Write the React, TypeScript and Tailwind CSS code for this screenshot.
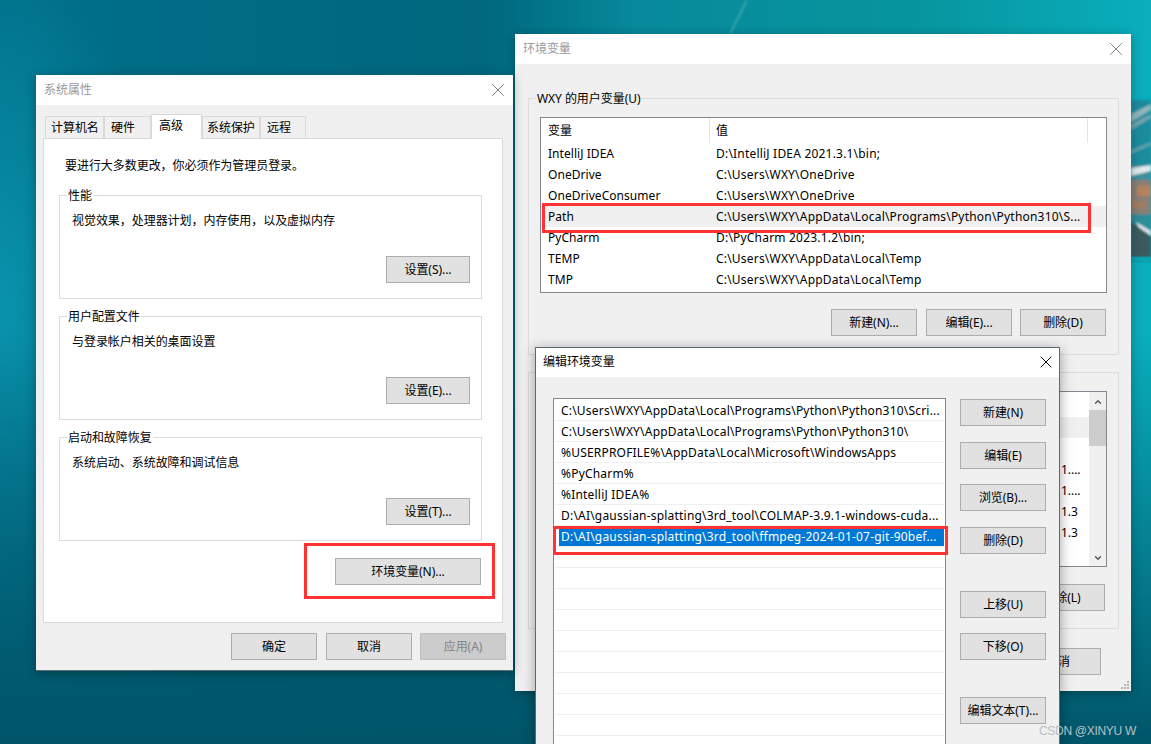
import type { ReactNode } from 'react';
import { ChevronDown, ChevronUp, X } from 'lucide-react';

function Wallpaper() {
  return (
    <svg className="absolute inset-0" width="1151" height="744" viewBox="0 0 1151 744">
      <defs>
        <linearGradient id="base" x1="0" y1="0" x2="1" y2="0">
          <stop offset="0" stopColor="#006f89" />
          <stop offset="0.42" stopColor="#00677e" />
          <stop offset="0.55" stopColor="#07899b" />
          <stop offset="0.8" stopColor="#07969f" />
          <stop offset="1" stopColor="#09aebd" />
        </linearGradient>
        <linearGradient id="fade" x1="0" y1="0" x2="0" y2="1">
          <stop offset="0" stopColor="#00566c" stopOpacity="0" />
          <stop offset="0.45" stopColor="#00566c" stopOpacity="0" />
          <stop offset="1" stopColor="#005569" stopOpacity="1" />
        </linearGradient>
        <radialGradient id="left" cx="0" cy="0.42" r="0.5">
          <stop offset="0" stopColor="#0a93ad" />
          <stop offset="1" stopColor="#0a93ad" stopOpacity="0" />
        </radialGradient>
        <filter id="soft"><feGaussianBlur stdDeviation="1.2" /></filter>
      </defs>
      <rect width="1151" height="744" fill="url(#base)" />
      <rect width="300" height="744" fill="url(#left)" />
      <rect width="1151" height="744" fill="url(#fade)" />
      <line x1="747" y1="0" x2="730" y2="34" stroke="#5fb3b6" strokeWidth="2" opacity="0.6" filter="url(#soft)" />
      <g filter="url(#soft)">
        <rect x="1131" y="100" width="20" height="66" fill="#1f8c9c" />
        <path d="M1131 114 L1151 104 L1151 110 L1131 122 Z" fill="#8fb6bb" />
        <path d="M1131 124 L1151 114 L1151 118 L1131 130 Z" fill="#6fa5ad" />
        <path d="M1131 150 L1151 142 L1151 145 L1131 154 Z" fill="#5fa3ad" />
        <rect x="1131" y="165" width="20" height="15" fill="#3d8f9c" />
        <path d="M1131 168 L1151 165 L1151 171 L1131 176 Z" fill="#dfeaea" />
        <rect x="1131" y="180" width="20" height="34" fill="#8a7f73" />
        <rect x="1137" y="186" width="14" height="10" fill="#b5825f" />
        <rect x="1131" y="202" width="14" height="6" fill="#a67c62" />
        <rect x="1131" y="214" width="20" height="19" fill="#2f8d99" />
        <path d="M1136 222 L1151 231 L1151 236 L1140 230 Z" fill="#d9e6e4" />
        <path d="M1131 222 L1151 236 L1151 257 L1131 257 Z" fill="#3a5a5e" />
      </g>
      <rect x="1131" y="257" width="20" height="6" fill="#0aa3b3" />
    </svg>
  );
}

function Btn({ children, className = '', disabled = false }: { children?: ReactNode; className?: string; disabled?: boolean }) {
  return (
    <div
      className={`flex h-[27px] shrink-0 items-center justify-center border ${
        disabled ? 'border-[#bfbfbf] bg-[#cccccc] text-[#838383]' : 'border-[#adadad] bg-[#e1e1e1] text-black'
      } ${className}`}
    >
      {children}
    </div>
  );
}

function Group({ title, className = '', legendClass = '', children }: { title?: string; className?: string; legendClass?: string; children?: ReactNode }) {
  return (
    <div className={`relative border border-[#dcdcdc] ${className}`}>
      {title && <span className={`absolute left-[7px] top-[-8px] px-px leading-4 ${legendClass}`}>{title}</span>}
      {children}
    </div>
  );
}

function PerfGroup({ title, text, btn, className = '' }: { title: string; text: string; btn: string; className?: string }) {
  return (
    <Group title={title} legendClass="bg-white" className={`ml-[15px] mr-[20px] h-[104px] ${className}`}>
      <p className="pl-[12px] pt-[17px] leading-4">{text}</p>
      <div className="mt-[27px] flex justify-end pr-[11px]">
        <Btn className="w-[84px]">{btn}</Btn>
      </div>
    </Group>
  );
}

const tabs = [
  { label: '计算机名', box: 'w-[59px] pl-[5px]' },
  { label: '硬件', box: 'w-[47px] pl-[6px]' },
  { label: '高级', box: 'w-[51px]', active: true },
  { label: '系统保护', box: 'w-[58px] pl-[4px]' },
  { label: '远程', box: 'w-[46px] pl-[6px]' },
];

function SystemProps() {
  return (
    <div className="absolute left-[36px] top-[75px] flex h-[596px] w-[477px] flex-col border-b border-[#5f6b70] bg-[#f0f0f0] shadow-[0_2px_10px_rgba(0,0,0,0.3)]">
      <div className="flex h-[30px] shrink-0 items-center justify-between bg-white pl-[8px] pr-[4px] text-[#999999]">
        <span>系统属性</span>
        <X size={22} strokeWidth={1} className="text-[#777777]" />
      </div>
      <div className="flex h-[33px] items-end pl-[9px]">
        {tabs.map((t) =>
          t.active ? (
            <div key={t.label} className={`relative z-10 mb-[-1px] flex h-[25px] ${t.box} border border-b-0 border-[#d9d9d9] bg-white pl-[7px] pt-[2px]`}>
              {t.label}
            </div>
          ) : (
            <div key={t.label} className={`flex h-[22px] ${t.box} items-center border border-b-0 border-[#d9d9d9] bg-[#f0f0f0]`}>
              {t.label}
            </div>
          ),
        )}
      </div>
      <div className="ml-[7px] mr-[10px] flex h-[485px] flex-col border border-[#d9d9d9] bg-white">
        <p className="pl-[21px] pt-[19px] leading-4">要进行大多数更改，你必须作为管理员登录。</p>
        <PerfGroup className="mt-[21px]" title="性能" text="视觉效果，处理器计划，内存使用，以及虚拟内存" btn="设置(S)..." />
        <PerfGroup className="mt-[17px]" title="用户配置文件" text="与登录帐户相关的桌面设置" btn="设置(E)..." />
        <PerfGroup className="mt-[17px]" title="启动和故障恢复" text="系统启动、系统故障和调试信息" btn="设置(T)..." />
        <div className="mt-[17px] flex justify-end pr-[21px]">
          <Btn className="w-[146px]">环境变量(N)...</Btn>
        </div>
      </div>
      <div className="mr-[7px] mt-[10px] flex justify-end">
        <Btn className="w-[86px]">确定</Btn>
        <Btn className="ml-[9px] w-[86px]">取消</Btn>
        <Btn disabled className="ml-[8px] w-[86px]">应用(A)</Btn>
      </div>
    </div>
  );
}

const userVars = [
  ['IntelliJ IDEA', 'D:\\IntelliJ IDEA 2021.3.1\\bin;'],
  ['OneDrive', 'C:\\Users\\WXY\\OneDrive'],
  ['OneDriveConsumer', 'C:\\Users\\WXY\\OneDrive'],
  ['Path', 'C:\\Users\\WXY\\AppData\\Local\\Programs\\Python\\Python310\\S...'],
  ['PyCharm', 'D:\\PyCharm 2023.1.2\\bin;'],
  ['TEMP', 'C:\\Users\\WXY\\AppData\\Local\\Temp'],
  ['TMP', 'C:\\Users\\WXY\\AppData\\Local\\Temp'],
];

function EnvVars() {
  return (
    <div className="absolute left-[515px] top-[34px] flex h-[657px] w-[616px] flex-col bg-[#f0f0f0] shadow-[0_2px_10px_rgba(0,0,0,0.3)]">
      <div className="flex h-[30px] shrink-0 items-center justify-between bg-white pl-[8px] pr-[4px] text-[#999999]">
        <span>环境变量</span>
        <X size={22} strokeWidth={1} className="text-[#777777]" />
      </div>
      <Group title="WXY 的用户变量(U)" legendClass="bg-[#f0f0f0]" className="ml-[13px] mr-[12px] mt-[34px] h-[257px]">
        <div className="ml-[11px] mr-[11px] mt-[18px] h-[176px] border border-[#828790] bg-white">
          <div className="flex h-[25px] items-stretch">
            <div className="flex w-[169px] items-center border-r border-[#e5e5e5] pl-[7px]">变量</div>
            <div className="flex w-[378px] items-center border-r border-[#e5e5e5] pl-[6px]">值</div>
          </div>
          {userVars.map(([name, value]) => (
            <div key={name} className={`flex h-[21px] items-center ${name === 'Path' ? 'bg-[#f0f0f0]' : ''}`}>
              <span className="w-[169px] pl-[7px] tracking-[0.05px]">{name}</span>
              <span className="pl-[6px] tracking-[0.2px]">{value}</span>
            </div>
          ))}
        </div>
        <div className="mr-[12px] mt-[16px] flex justify-end">
          <Btn className="w-[86px]">新建(N)...</Btn>
          <Btn className="ml-[9px] w-[86px]">编辑(E)...</Btn>
          <Btn className="ml-[8px] w-[86px]">删除(D)</Btn>
        </div>
      </Group>
      {/* system variables group, mostly covered by the edit dialog */}
      <Group className="ml-[13px] mr-[12px] mt-[17px] h-[257px]">
        <div className="ml-[11px] mr-[11px] mt-[18px] flex h-[176px] border border-[#828790] bg-white">
          <div className="flex-1">
            <div className="h-[25px]" />
            {['', '', '1....', '1....', '1.3', '1.3'].map((v, i) => (
              <div key={i} className={`flex h-[21px] items-center pl-[520px] ${i === 0 ? 'bg-[#f0f0f0]' : ''}`}>{v}</div>
            ))}
          </div>
          <div className="flex w-[17px] flex-col items-center bg-[#f0f0f0]">
            <ChevronUp size={10} strokeWidth={3} className="mt-[5px] text-[#505050]" />
            <div className="mt-[3px] h-[36px] w-full bg-[#cdcdcd]" />
            <div className="flex-1" />
            <ChevronDown size={10} strokeWidth={3} className="mb-[3px] text-[#505050]" />
          </div>
        </div>
        <div className="mr-[13px] mt-[17px] flex justify-end gap-[8px]">
          <Btn className="w-[86px]">删除(L)</Btn>
        </div>
      </Group>
      <div className="mr-[30px] mt-[19px] flex justify-end gap-[8px]">
        <Btn className="w-[86px]">确定</Btn>
        <Btn className="w-[86px]">取消</Btn>
      </div>
      <svg className="absolute bottom-[2px] right-[2px]" width="8" height="8" viewBox="0 0 8 8" fill="#b5b5b5">
        <rect x="6" y="0" width="2" height="2" />
        <rect x="3" y="3" width="2" height="2" />
        <rect x="6" y="3" width="2" height="2" />
        <rect x="0" y="6" width="2" height="2" />
        <rect x="3" y="6" width="2" height="2" />
        <rect x="6" y="6" width="2" height="2" />
      </svg>
    </div>
  );
}

const pathRows = [
  'C:\\Users\\WXY\\AppData\\Local\\Programs\\Python\\Python310\\Scri...',
  'C:\\Users\\WXY\\AppData\\Local\\Programs\\Python\\Python310\\',
  '%USERPROFILE%\\AppData\\Local\\Microsoft\\WindowsApps',
  '%PyCharm%',
  '%IntelliJ IDEA%',
  'D:\\AI\\gaussian-splatting\\3rd_tool\\COLMAP-3.9.1-windows-cuda...',
  'D:\\AI\\gaussian-splatting\\3rd_tool\\ffmpeg-2024-01-07-git-90bef...',
  '', '', '', '', '', '', '', '', '', '',
];

const sideButtons = [
  { label: '新建(N)', gap: 'mt-0' },
  { label: '编辑(E)', gap: 'mt-[16px]' },
  { label: '浏览(B)...', gap: 'mt-[15px]' },
  { label: '删除(D)', gap: 'mt-[16px]' },
  { label: '上移(U)', gap: 'mt-[37px]' },
  { label: '下移(O)', gap: 'mt-[15px]' },
  { label: '编辑文本(T)...', gap: 'mt-[37px]' },
];

function EditPath() {
  return (
    <div className="absolute left-[535px] top-[347px] flex h-[420px] w-[525px] flex-col border border-b-0 border-[#5c6b72] bg-[#f0f0f0] shadow-[0_2px_12px_rgba(0,0,0,0.35)]">
      <div className="flex h-[29px] shrink-0 items-center justify-between bg-white pb-px pl-[7px] pr-[3px] text-black">
        <span>编辑环境变量</span>
        <X size={20} strokeWidth={1.2} className="text-black" />
      </div>
      <div className="flex items-start pl-[17px] pt-[21px]">
        <div className="h-[400px] w-[393px] border border-[#828790] bg-white px-px pt-px">
          {pathRows.map((row, i) => (
            <div key={i} className="h-[21px] border-b border-[#f0f0f0] pl-[4px]">
              <div className={`flex h-[20px] items-center pl-[2px] pt-px tracking-[0.2px] ${i === 6 ? 'bg-[#0078d7] text-white' : ''}`}>{row}</div>
            </div>
          ))}
        </div>
        <div className="ml-[14px] mt-px flex w-[86px] flex-col">
          {sideButtons.map((b) => (
            <Btn key={b.label} className={`w-[86px] ${b.gap}`}>{b.label}</Btn>
          ))}
        </div>
      </div>
    </div>
  );
}

export default function App() {
  return (
    <div className="relative h-[744px] w-[1151px] overflow-hidden text-[12px] tracking-[-0.05px] text-black font-['Noto_Sans','Noto_Sans_CJK_SC',sans-serif]">
      <Wallpaper />
      <EnvVars />
      <SystemProps />
      <EditPath />
      {/* red annotation boxes */}
      <div className="absolute left-[304px] top-[543px] h-[56px] w-[191px] border-[3px] border-[#ff3333]" />
      <div className="absolute left-[542px] top-[203px] h-[30px] w-[549px] border-[3px] border-[#ff3333]" />
      <div className="absolute left-[553px] top-[526px] h-[29px] w-[395px] border-[3px] border-[#ff3333]" />
      <span className="absolute left-[1039px] top-[722px] text-[12px] tracking-[-0.3px] text-[#b8c0c4] font-['Liberation_Sans',sans-serif]">CSDN @XINYU W</span>
    </div>
  );
}
